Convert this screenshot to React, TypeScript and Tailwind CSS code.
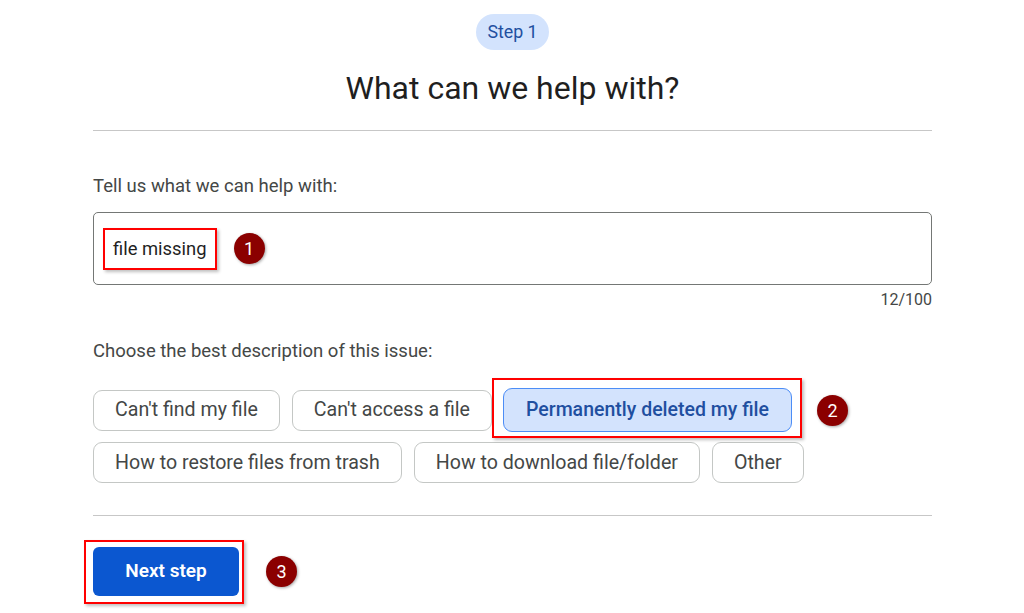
const chipsRow1 = ["Can't find my file", "Can't access a file"];
const chipsRow2 = ["How to restore files from trash", "How to download file/folder", "Other"];

const Badge = ({ n, className = "" }: { n: number; className?: string }) => (
  <span
    className={`flex items-center justify-center w-[31px] h-[31px] rounded-full bg-[#8b0000] text-white text-[18px] leading-none shadow-[1px_1px_3px_rgba(0,0,0,0.35)] ${className}`}
  >
    {n}
  </span>
);

const Chip = ({ label }: { label: string }) => (
  <button className="h-[41px] px-[21px] rounded-[9px] border border-[#c4c7c5] bg-white text-[19.6px] text-[#444746] whitespace-nowrap">
    {label}
  </button>
);

const App = () => {
  return (
    <div className="w-[1024px] h-[613px] bg-white overflow-hidden font-['Roboto',sans-serif]">
      <div className="ml-[93px] w-[839px] pt-[14px] flex flex-col">
        <div className="flex justify-center">
          <span className="h-[36px] px-[11px] flex items-center rounded-full bg-[#d3e3fd] text-[#1f4fa0] text-[17.8px]">
            Step 1
          </span>
        </div>
        <h1 className="mt-[20px] text-center text-[32px] leading-[36px] text-[#1f1f1f]">
          What can we help with?
        </h1>
        <hr className="mt-[24px] border-t border-[#c7c7c7]" />

        <label className="mt-[43px] text-[18.5px] leading-[24px] text-[#444746]">
          Tell us what we can help with:
        </label>
        <div className="mt-[14px] h-[73px] rounded-[5px] border border-[#747775] flex items-center pl-[9px]">
          <span className="h-[42px] px-[8px] flex items-center border-2 border-[#ff0000] text-[18.4px] text-[#1f1f1f] shadow-[2px_2px_3px_rgba(0,0,0,0.25)]">
            file missing
          </span>
          <Badge n={1} className="ml-[17px]" />
        </div>
        <div className="mt-[5px] text-right text-[16px] leading-[20px] text-[#444746]">12/100</div>

        <label className="mt-[29px] text-[18.5px] leading-[24px] text-[#444746]">
          Choose the best description of this issue:
        </label>

        <div className="mt-[25px] flex flex-col gap-[10px]">
          <div className="flex items-center gap-[12px] h-[44px]">
            {chipsRow1.map((c) => (
              <Chip key={c} label={c} />
            ))}
            <div className="relative ml-[-1px]">
              <button className="h-[44px] px-[22px] rounded-[9px] border border-[#4c8df6] bg-[#d3e3fd] text-[19.5px] font-medium text-[#1f4fa0] whitespace-nowrap">
                Permanently deleted my file
              </button>
              <span className="absolute left-[-11px] right-[-10px] top-[-10px] bottom-[-6px] border-2 border-[#ff0000] shadow-[2px_2px_3px_rgba(0,0,0,0.25)] pointer-events-none" />
              <Badge n={2} className="absolute left-[calc(100%+25px)] top-[7px]" />
            </div>
          </div>
          <div className="flex items-center gap-[12px]">
            {chipsRow2.map((c) => (
              <Chip key={c} label={c} />
            ))}
          </div>
        </div>

        <hr className="mt-[32px] border-t border-[#c7c7c7]" />

        <div className="mt-[31px] flex">
          <div className="relative">
            <button className="h-[49px] w-[146px] rounded-[6px] bg-[#0b57d0] text-white text-[19px] font-semibold">
              Next step
            </button>
            <span className="absolute left-[-9px] right-[-5px] top-[-7px] bottom-[-8px] border-2 border-[#ff0000] shadow-[2px_2px_3px_rgba(0,0,0,0.25)] pointer-events-none" />
            <Badge n={3} className="absolute left-[calc(100%+27px)] top-[9px]" />
          </div>
        </div>
      </div>
    </div>
  );
};

export default App;
